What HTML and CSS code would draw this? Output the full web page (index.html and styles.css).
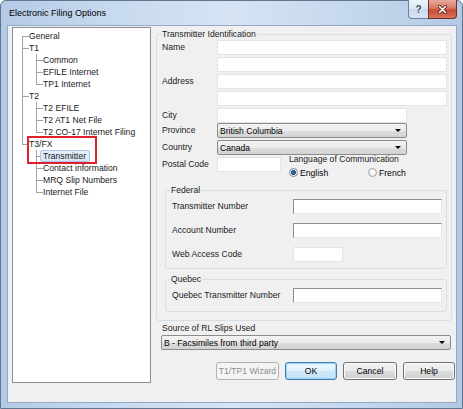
FILE: index.html
```html
<!DOCTYPE html>
<html>
<head>
<meta charset="utf-8">
<title>Electronic Filing Options</title>
<link rel="stylesheet" href="styles.css">
</head>
<body>
<div class="window">
  <div class="titlebar">
    <span class="title">Electronic Filing Options</span>
    <div class="caption-btns">
      <span class="cbtn help-cap">?</span>
      <span class="cbtn close-cap"><svg width="11" height="9" viewBox="0 0 11 9"><path d="M2.5 1.5 L8.5 7.5 M8.5 1.5 L2.5 7.5" stroke="#6a2a24" stroke-width="3.2" stroke-linecap="round"/><path d="M2.5 1.5 L8.5 7.5 M8.5 1.5 L2.5 7.5" stroke="#ffffff" stroke-width="1.6" stroke-linecap="round"/></svg></span>
    </div>
  </div>
  <div class="client">
    <div class="tree">
      <div class="row"><span class="c first"></span><span class="t">General</span></div>
      <div class="row"><span class="c mid"></span><span class="t">T1</span></div>
      <div class="row"><span class="c pass"></span><span class="c mid"></span><span class="t">Common</span></div>
      <div class="row"><span class="c pass"></span><span class="c mid"></span><span class="t">EFILE Internet</span></div>
      <div class="row"><span class="c pass"></span><span class="c last"></span><span class="t">TP1 Internet</span></div>
      <div class="row"><span class="c mid"></span><span class="t">T2</span></div>
      <div class="row"><span class="c pass"></span><span class="c mid"></span><span class="t">T2 EFILE</span></div>
      <div class="row"><span class="c pass"></span><span class="c mid"></span><span class="t">T2 AT1 Net File</span></div>
      <div class="row"><span class="c pass"></span><span class="c last"></span><span class="t">T2 CO-17 Internet Filing</span></div>
      <div class="row"><span class="c last"></span><span class="t">T3/FX</span></div>
      <div class="row"><span class="c"></span><span class="c mid"></span><span class="t sel">Transmitter</span></div>
      <div class="row"><span class="c"></span><span class="c mid"></span><span class="t">Contact information</span></div>
      <div class="row"><span class="c"></span><span class="c mid"></span><span class="t">MRQ Slip Numbers</span></div>
      <div class="row"><span class="c"></span><span class="c last"></span><span class="t">Internet File</span></div>
      <div class="annot"></div>
    </div>
    <div class="main">
      <div class="group ti">
        <div class="legend">Transmitter Identification</div>
        <div class="form">
          <span class="lbl">Name</span><span class="input"></span>
          <span class="lbl"></span><span class="input"></span>
          <span class="lbl">Address</span><span class="input"></span>
          <span class="lbl"></span><span class="input"></span>
          <span class="lbl">City</span><span class="input w190"></span>
          <span class="lbl">Province</span><span class="select w190"><span class="sel-text">British Columbia</span><span class="arrow"></span></span>
          <span class="lbl">Country</span><span class="select w190"><span class="sel-text">Canada</span><span class="arrow"></span></span>
          <span class="lbl">Postal Code</span>
          <div class="postal-row">
            <span class="input w64"></span>
            <div class="lang">
              <div class="lang-lbl">Language of Communication</div>
              <div class="radios">
                <span class="radio-item first-radio"><span class="radio on"></span>English</span>
                <span class="radio-item"><span class="radio"></span>French</span>
              </div>
            </div>
          </div>
        </div>
        <div class="group sub federal">
          <div class="legend">Federal</div>
          <div class="subform fed-form">
            <span class="lbl">Transmitter Number</span><span class="input sunken"></span>
            <span class="lbl">Account Number</span><span class="input sunken"></span>
            <span class="lbl">Web Access Code</span><span class="input w50"></span>
          </div>
        </div>
        <div class="group sub quebec">
          <div class="legend">Quebec</div>
          <div class="subform">
            <span class="lbl">Quebec Transmitter Number</span><span class="input sunken"></span>
          </div>
        </div>
      </div>
      <div class="source-lbl">Source of RL Slips Used</div>
      <div class="select source"><span class="sel-text">B - Facsimiles from third party</span><span class="arrow"></span></div>
      <div class="buttons">
        <span class="btn wizard disabled">T1/TP1 Wizard</span>
        <span class="btn ok default">OK</span>
        <span class="btn cancel">Cancel</span>
        <span class="btn help">Help</span>
      </div>
    </div>
  </div>
</div>
</body>
</html>
```
FILE: styles.css
```css
* { box-sizing: border-box; }
html, body { margin: 0; padding: 0; }
body {
  width: 463px;
  height: 409px;
  overflow: hidden;
  background: #ffffff;
  font-family: "Liberation Sans", Arial, sans-serif;
  font-size: 8.6px;
  color: #000;
}

/* window frame */
.window {
  width: 463px;
  height: 409px;
  display: flex;
  flex-direction: column;
  border: 1px solid #62768f;
  border-radius: 6px 6px 0 0;
  background: linear-gradient(to right, #b4cae6 0%, #c8daef 25%, #d6e4f4 50%, #c6d8ee 75%, #b3c9e5 100%);
  padding: 0 5px 5px 6px;
}
.titlebar {
  height: 24px;
  flex: none;
  display: flex;
  align-items: flex-start;
}
.title {
  line-height: 24px;
  padding-left: 2px;
  font-size: 9px;
  color: #000;
}
.caption-btns {
  margin-left: auto;
  margin-top: -1px;
  display: flex;
}
.cbtn {
  height: 19px;
  display: flex;
  align-items: center;
  justify-content: center;
  border: 1px solid #6d7f98;
  border-top: none;
}
.help-cap {
  width: 20px;
  border-radius: 0 0 0 4px;
  border-right: none;
  background: linear-gradient(#eef3fa 0%, #dbe5f2 50%, #c9d8eb 51%, #d8e4f2 100%);
  color: #3a4f6b;
  font-size: 10px;
  font-weight: bold;
  text-shadow: 0 0 2px #fff;
}
.close-cap {
  width: 29px;
  border-color: #6e2f28;
  border-radius: 0 0 4px 0;
  background: linear-gradient(#e9aa9c 0%, #d67a66 45%, #c84a35 55%, #d8765c 100%);
}

/* client area */
.client {
  flex: 1;
  display: flex;
  border: 1px solid #93a9c6;
  background: #f0f0f0;
}

/* tree view */
.tree {
  position: relative;
  width: 139px;
  height: 356px;
  margin: 1px 0 0 4px;
  border: 1px solid #8a8f96;
  background: #fff;
  padding: 2px 0 0 2px;
}
.row {
  display: flex;
  height: 12px;
  align-items: flex-start;
}
.c {
  --lc: #a3a3a3;
  width: 14px;
  height: 12px;
  flex: none;
  background-repeat: no-repeat;
}
.c.mid {
  background-image: linear-gradient(var(--lc), var(--lc)), linear-gradient(var(--lc), var(--lc));
  background-size: 1px 12px, 7px 1px;
  background-position: 7px 0, 7px 6px;
}
.c.first {
  background-image: linear-gradient(var(--lc), var(--lc)), linear-gradient(var(--lc), var(--lc));
  background-size: 1px 6px, 7px 1px;
  background-position: 7px 6px, 7px 6px;
}
.c.last {
  background-image: linear-gradient(var(--lc), var(--lc)), linear-gradient(var(--lc), var(--lc));
  background-size: 1px 7px, 7px 1px;
  background-position: 7px 0, 7px 6px;
}
.c.pass {
  background-image: linear-gradient(var(--lc), var(--lc));
  background-size: 1px 12px;
  background-position: 7px 0;
}
.t {
  line-height: 10px;
  height: 12px;
  padding: 0 3px 0 2px;
  margin-left: -3px;
  border: 1px solid transparent;
  white-space: nowrap;
  color: #1a1a1a;
}
.t.sel {
  background: linear-gradient(#e8f0fa, #d6e4f5);
  border-color: #a9c4e4;
  border-radius: 2px;
}
.annot {
  position: absolute;
  left: 14px;
  top: 108px;
  width: 70px;
  height: 28px;
  border: 2px solid #e0202a;
}

/* main panel */
.main {
  width: 299px;
  margin-left: 5px;
  display: flex;
  flex-direction: column;
}
.group {
  border: 1px solid #d5dfe5;
  border-radius: 3px;
}
.legend {
  line-height: 12px;
  height: 12px;
  margin-top: -7px;
  margin-left: 4px;
  padding: 0 1px;
  background: #f0f0f0;
  width: max-content;
  color: #1a1a1a;
}
.ti {
  margin: 8px 3px 0 0;
  padding-bottom: 4px;
}
.form {
  display: grid;
  grid-template-columns: 55px 230px;
  grid-template-rows: 17px 17px 17px 17px 15px 17px 17px auto;
  padding-left: 5px;
}
.lbl {
  line-height: 15px;
  white-space: nowrap;
  color: #1a1a1a;
}
.input {
  display: block;
  height: 15px;
  background: #fff;
  border: 1px solid #e1e5ea;
}
.input.sunken {
  border-color: #8e8e8e #e6e6e6 #e6e6e6 #8e8e8e;
}
.w190 { width: 190px; }
.w64 { width: 64px; }
.w50 { width: 50px; }

.select {
  display: flex;
  align-items: center;
  height: 15px;
  border: 1px solid #8b8b8b;
  border-radius: 2px;
  background: linear-gradient(#f3f3f3 0%, #ebebeb 50%, #dddddd 51%, #d3d3d3 100%);
  padding-left: 2px;
}
.sel-text { white-space: nowrap; line-height: 12px; }
.arrow {
  margin-left: auto;
  margin-right: 5px;
  width: 0;
  height: 0;
  border-left: 3px solid transparent;
  border-right: 3px solid transparent;
  border-top: 3px solid #000;
}

.postal-row {
  display: flex;
  align-items: flex-start;
}
.lang {
  margin: -3px 0 0 8px;
}
.lang-lbl {
  line-height: 11px;
  white-space: nowrap;
  color: #1a1a1a;
}
.radios {
  display: flex;
  align-items: center;
  height: 13px;
  margin-top: 1px;
}
.radio-item {
  display: flex;
  align-items: center;
  gap: 2px;
}
.first-radio { width: 79px; }
.radio {
  width: 9px;
  height: 9px;
  border-radius: 50%;
  border: 1px solid #a2a2a2;
  background: radial-gradient(circle at 50% 40%, #ffffff 0%, #e4e4e4 100%);
  flex: none;
}
.radio.on {
  border-color: #7e8a96;
  background: radial-gradient(circle, #3f7fc0 0, #1d4f86 1.6px, #2a5d93 2.2px, #f2f2f2 2.8px, #dcdcdc 100%);
}

.sub {
  margin: 0 4px 0 8px;
}
.federal {
  margin-top: 11px;
  padding-bottom: 6px;
}
.quebec {
  margin-top: 10px;
  padding-bottom: 8px;
  margin-bottom: 4px;
}
.legend + .subform { margin-top: 3px; }
.subform {
  display: grid;
  grid-template-columns: 121px 149px;
  padding-left: 6px;
}
.fed-form { row-gap: 9px; }

.source-lbl {
  margin: 1px 0 0 6px;
  line-height: 12px;
  color: #1a1a1a;
}
.select.source {
  margin: 1px 4px 0 5px;
}

.buttons {
  margin-top: 12px;
  display: flex;
  justify-content: flex-end;
  gap: 6px;
}
.btn {
  height: 18px;
  display: flex;
  align-items: center;
  justify-content: center;
  border: 1px solid #707070;
  border-radius: 3px;
  background: linear-gradient(#f2f2f2 0%, #ebebeb 50%, #dddddd 51%, #cfcfcf 100%);
  box-shadow: inset 0 0 0 1px #fbfbfb;
  white-space: nowrap;
}
.wizard { width: 63px; }
.ok { width: 52px; }
.cancel { width: 54px; }
.help { width: 52px; }
.btn.disabled {
  border-color: #adb2b5;
  background: #f4f4f4;
  color: #8d8d8d;
  box-shadow: none;
}
.btn.default {
  border-color: #3c7fb1;
  background: linear-gradient(#eaf6fd 0%, #e1f1fb 50%, #cfe8f8 51%, #c4e2f6 100%);
  box-shadow: inset 0 0 0 1px #97d4f7;
}
```
